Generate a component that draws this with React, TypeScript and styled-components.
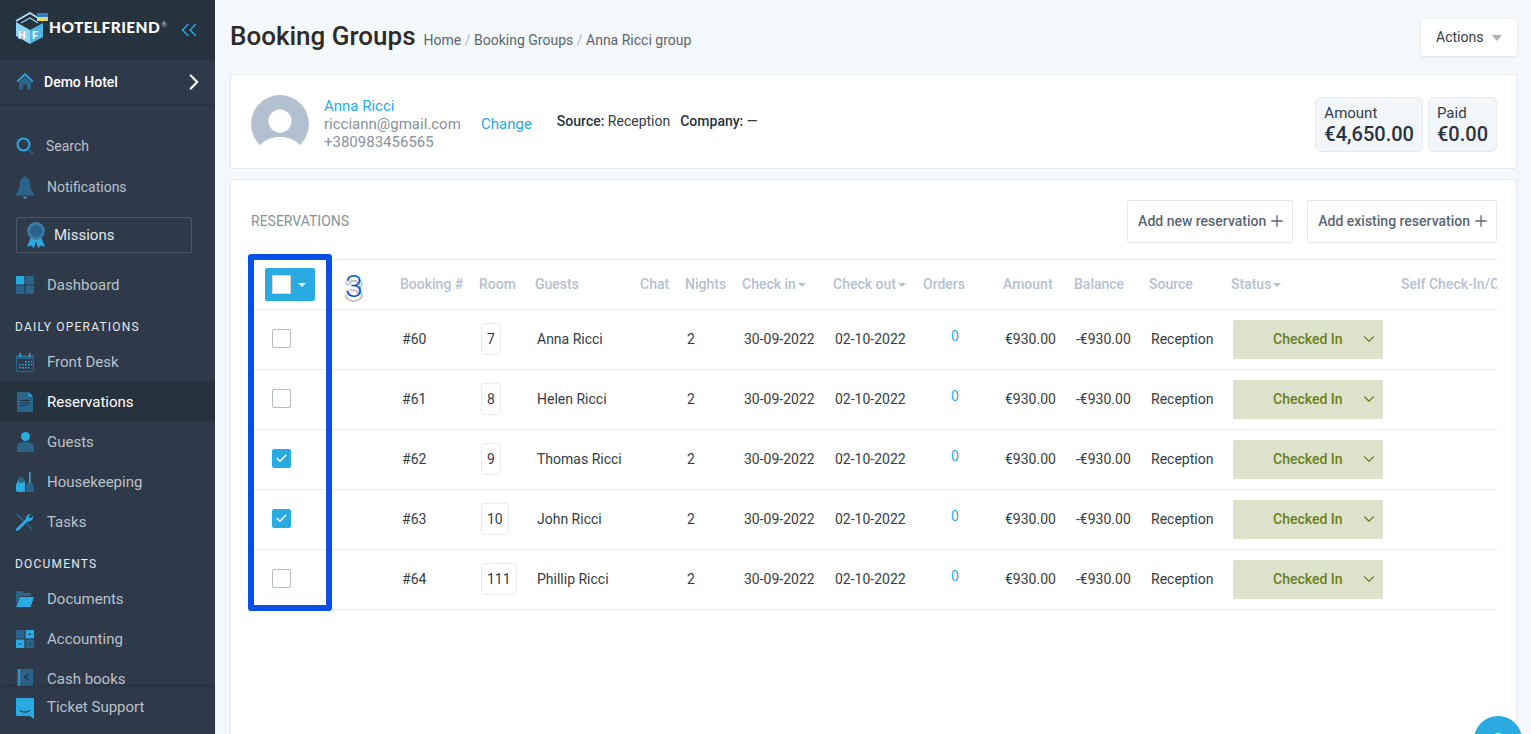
import React from 'react';
import styled, {createGlobalStyle} from 'styled-components';
import {Check, ChevronDown, ChevronRight, ChevronsLeft, Plus} from 'lucide-react';

const BLUE = '#29abe2';
const DEEP = '#2b6488';

const GlobalStyle = createGlobalStyle`
  html, body {
    margin: 0;
    padding: 0;
    height: 100%;
    overflow: hidden;
  }
  body {
    font-family: Roboto, "Liberation Sans", sans-serif;
    background-color: #f5f8fb;
  }
  * {
    box-sizing: border-box;
  }
`

const Page = styled.div`
  display: flex;
  width: 1531px;
  height: 734px;
  overflow: hidden;
  position: relative;
`

/* sidebar */
const Sidebar = styled.aside`
  width: 215px;
  flex: none;
  height: 734px;
  display: flex;
  flex-direction: column;
  background-color: #2e3a4a;
`

const LogoBar = styled.div`
  height: 60px;
  flex: none;
  display: flex;
  align-items: center;
  padding: 0 0 4px 15px;
  background-color: #27323f;
`

const LogoText = styled.span`
  font-family: Lato, Roboto, sans-serif;
  font-size: 15.5px;
  font-weight: 900;
  letter-spacing: 0.4px;
  color: #fff;
  line-height: 1;

  sup {
    font-size: 7px;
    font-weight: 400;
    color: #c8d0d8;
    vertical-align: 6px;
    line-height: 0;
    letter-spacing: 0;
    margin-left: 1px;
  }
`

const Collapse = styled.span`
  display: flex;
  margin-left: auto;
  margin-right: 13px;
  margin-top: 3px;
  color: ${BLUE};
`

const HotelRow = styled.div`
  height: 46px;
  flex: none;
  display: flex;
  align-items: center;
  padding: 0 8px 0 16px;
  border-bottom: 2px solid #283442;
  color: #fff;
  font-size: 14px;
  font-weight: 500;
  gap: 10px;

  svg:last-child {
    margin-left: auto;
  }
`

const Nav = styled.nav`
  flex: 1;
  min-height: 0;
  overflow: hidden;
  padding-top: 19px;
`

const NavItem = styled.div<{active?: boolean; tall?: number}>`
  height: ${({tall}) => tall || 40}px;
  display: flex;
  align-items: center;
  gap: 13px;
  padding: 2px 0 0 16px;
  font-size: 15px;
  color: ${({active}) => active ? '#fff' : '#b9c1cb'};
  background-color: ${({active}) => active ? '#27323f' : 'transparent'};
`

const SearchItem = styled(NavItem)`
  font-size: 14px;
  gap: 12px;
`

const NoticeItem = styled(NavItem)`
  font-size: 14px;
`

const DashboardItem = styled(NavItem)`
  padding-top: 0;
`

const IconSlot = styled.span`
  width: 18px;
  height: 20px;
  flex: none;
  display: flex;
  align-items: center;
  justify-content: center;
`

const MissionsBox = styled.div`
  height: 36px;
  margin: 10px 23px 12px 16px;
  border: 1px solid #4a5766;
  border-radius: 2px;
  display: flex;
  align-items: center;
  gap: 8px;
  padding-left: 9px;
  font-size: 15px;
  color: #e4e8ec;
`

const SectionLabel = styled.div<{tall: number}>`
  height: ${({tall}) => tall}px;
  display: flex;
  align-items: center;
  padding: 8px 0 0 15px;
  font-size: 12px;
  letter-spacing: 1.2px;
  color: #e4e8ec;
`

const Footer = styled.div`
  height: 48px;
  flex: none;
  border-top: 1px solid #283442;
  display: flex;
  align-items: flex-start;
  gap: 13px;
  padding: 11px 0 0 16px;
  font-size: 15px;
  color: #b9c1cb;
  box-shadow: 0 -1px 2px rgba(0, 0, 0, 0.12);
`

/* main column */
const Main = styled.main`
  flex: 1;
  min-width: 0;
  padding: 0 14px 0 15px;
`

const TopBar = styled.header`
  height: 74px;
  display: flex;
  align-items: flex-start;
  padding-top: 19px;
`

const Title = styled.h1`
  margin: 0;
  font-size: 26px;
  font-weight: 500;
  line-height: 34px;
  color: #2b2b2b;
`

const Crumbs = styled.div`
  margin: 6px 0 0 8px;
  line-height: 30px;
  font-size: 14px;
  color: #5c6670;

  i {
    font-style: normal;
    color: #b0b8c0;
    margin: 0 3.5px;
  }
`

const ActionsButton = styled.button`
  margin-left: auto;
  width: 96px;
  height: 37px;
  border: 0;
  background-color: #fff;
  box-shadow: 0 1px 3px rgba(60, 80, 100, 0.14);
  border-radius: 2px;
  font: 400 14px Roboto, sans-serif;
  color: #333c45;
  display: flex;
  align-items: center;
  padding: 0 15px 2px 15px;
  justify-content: space-between;

  &:after {
    content: '';
    border-left: 5px solid transparent;
    border-right: 5px solid transparent;
    border-top: 6px solid #a9b1ba;
    margin-top: 3px;
  }
`

const Card = styled.section`
  background-color: #fff;
  border: 1px solid #e4eaef;
  border-radius: 2px;
`

const GuestCard = styled(Card)`
  height: 95px;
  margin-bottom: 10px;
  display: flex;
  padding: 20px 19px 0 20px;
`

const Avatar = styled.svg`
  width: 58px;
  height: 58px;
  flex: none;
`

const Contact = styled.div`
  margin-left: 15px;
  font-size: 15px;
  line-height: 18px;
  color: #87919c;
  margin-top: 2px;
  width: 157px;
`

const LinkText = styled.a`
  color: ${BLUE};
  display: block;
`

const ChangeLink = styled(LinkText)`
  font-size: 15px;
  line-height: 18px;
  margin-top: 20px;
`

const Meta = styled.div`
  margin: 17px 0 0 25px;
  font-size: 14px;
  line-height: 18px;
  color: #333c45;
  display: flex;
  gap: 10px;

  b {
    font-weight: 500;
    color: #2a333c;
  }
`

const Totals = styled.div`
  margin-left: auto;
  margin-top: 2px;
  display: flex;
  gap: 5px;
`

const TotalBox = styled.div`
  height: 55px;
  padding: 6px 8px 0 8px;
  background-color: #f3f6f9;
  border: 1px solid #e4eaef;
  border-radius: 6px;
`

const TotalLabel = styled.div`
  font-size: 15px;
  line-height: 18px;
  color: #333c45;
`

const TotalValue = styled.div`
  font-size: 20px;
  font-weight: 500;
  line-height: 25px;
  color: #29333e;
`

const TableCard = styled(Card)`
  height: 600px;
  padding: 20px 19px 0 20px;
`

const CardHead = styled.div`
  height: 43px;
  display: flex;
  align-items: center;
  gap: 14px;
  margin-bottom: 16px;
`

const CardTitle = styled.div`
  margin-right: auto;
  padding-bottom: 2px;
  font-size: 14px;
  color: #87919c;
  text-transform: uppercase;
`

const AddButton = styled.button`
  height: 43px;
  padding: 0 6px 2px 10px;
  border: 1px solid #e1e7ec;
  border-radius: 3px;
  background-color: #fff;
  font: 500 14px Roboto, sans-serif;
  color: #5b6674;
  display: flex;
  align-items: center;
  gap: 2px;
`

const TableWrap = styled.div`
  position: relative;
`

const Table = styled.div`
  overflow: hidden;
  border-top: 1px solid #e6ecf0;
`

const COLUMNS = '149px 79px 56px 105px 45px 57px 91px 90px 80px 71px 75px 82px 170px 96px';

const HeadRow = styled.div`
  display: grid;
  grid-template-columns: ${COLUMNS};
  height: 50px;
  padding-bottom: 2px;
  align-items: center;
  border-bottom: 1px solid #e6ecf0;
  white-space: nowrap;
  font-size: 14px;
  font-weight: 500;
  color: #b5c1cf;
`

const Sort = styled.span`
  display: flex;
  align-items: center;
  gap: 2px;

  &:after {
    content: '';
    border-left: 4px solid transparent;
    border-right: 4px solid transparent;
    border-top: 4px solid #b5c1cf;
    margin-top: 2px;
  }
`

const BodyRow = styled.div`
  display: grid;
  grid-template-columns: ${COLUMNS};
  height: 60px;
  padding-bottom: 2px;
  align-items: center;
  border-bottom: 1px solid #e6ecf0;
  white-space: nowrap;
  font-size: 14px;
  color: #343c44;
`

const Cell = styled.div`
  padding-left: 2px;
`

const CheckCell = styled.div`
  padding-left: 21px;
  display: flex;
`

const Box = styled.span<{checked?: boolean}>`
  width: 19px;
  height: 19px;
  border-radius: 2px;
  border: 1px solid ${({checked}) => checked ? BLUE : '#b4bcc6'};
  background-color: ${({checked}) => checked ? BLUE : '#fff'};
  display: flex;
  align-items: center;
  justify-content: center;
  color: #fff;
`

const MasterCheck = styled.div`
  margin: 2px 0 0 14px;
  width: 50px;
  height: 33px;
  border-radius: 2px;
  background-color: ${BLUE};
  display: flex;
  align-items: center;
  padding-left: 7px;

  &:after {
    content: '';
    margin-left: 7px;
    border-left: 4px solid transparent;
    border-right: 4px solid transparent;
    border-top: 4px solid #fff;
  }
`

const MasterBox = styled.span`
  width: 19px;
  height: 19px;
  background-color: #fff;
  border: 1px solid #cfd6dd;
`

const RoomTag = styled.span`
  display: inline-flex;
  align-items: center;
  height: 32px;
  padding: 0 5px;
  min-width: 20px;
  justify-content: center;
  border: 1px solid #e6ecf0;
  border-radius: 3px;
`

const OrdersLink = styled.a`
  display: block;
  padding-left: 28px;
  margin-top: -6px;
  color: ${BLUE};
`

const StatusSelect = styled.div`
  width: 150px;
  height: 39px;
  margin: 2px 0 0 2px;
  border-radius: 2px;
  background-color: #dde3cb;
  color: #6b7f1e;
  font-weight: 500;
  display: flex;
  align-items: center;
  padding: 0 5px 2px 40px;
  justify-content: space-between;
`

const Highlight = styled.div`
  position: absolute;
  left: -3px;
  top: -5px;
  width: 84px;
  height: 357px;
  border: 6px solid #0a50e8;
  border-radius: 3px;
  pointer-events: none;
`

const Step = styled.span`
  position: absolute;
  left: 94px;
  top: 8px;
  font-size: 32px;
  line-height: 38px;
  font-weight: 300;
  color: #0a50e8;
  text-shadow: 0 2px 0 #fff, 0 3px 0 #fff, -2px 4px 0 #c0c4c8, 2px 4px 0 #c0c4c8, 0 5px 0 #c0c4c8;
`

const ChatBubble = styled.div`
  position: absolute;
  left: 1474px;
  top: 716px;
  width: 48px;
  height: 48px;
  border-radius: 50%;
  background-color: ${BLUE};

  &:after {
    content: '';
    position: absolute;
    left: 18px;
    top: 17px;
    width: 12px;
    height: 12px;
    border-radius: 50%;
    background-color: #fff;
  }
`

/* drawn icons */
const Logo = () => (
  <svg width="34" height="36" viewBox="0 0 34 36">
    <path d="M1 12 L15 20 V34 L1 26 Z" fill="#8fd4f0"/>
    <path d="M28 13 L15 20 V34 L28 27 Z" fill="#4fb4e2"/>
    <path d="M1 11 L15 3 L28 11" fill="none" stroke="#b4e0f3" strokeWidth="1.8"/>
    <path d="M6 13 L15 8 L23 13" fill="none" stroke="#8fd4f0" strokeWidth="1.300"/>
    <text x="3" y="29" fontSize="11" fontWeight="700" fontFamily="Roboto" fill="#fff">H</text>
    <text x="17" y="29" fontSize="11" fontWeight="700" fontFamily="Roboto" fill="#fff">F</text>
    <rect x="22" y="3" width="11" height="4" fill="#2b7fc4"/>
    <rect x="22" y="7" width="11" height="4" fill="#e5d774"/>
  </svg>
);

const HomeIcon = () => (
  <svg width="18" height="18" viewBox="0 0 18 18" style={{marginTop: -2}}>
    <path d="M0.5 9 L9 1 L17.5 9 L16 10 L9 3.6 L2 10 Z" fill={BLUE}/>
    <path d="M3 10 L9 5 L15 10 V17.5 H11 V12.5 H7 V17.5 H3 Z" fill={DEEP}/>
  </svg>
);

const SearchIcon = () => (
  <svg width="18" height="18" viewBox="0 0 18 18" fill="none">
    <circle cx="7.5" cy="7.5" r="6" stroke={BLUE} strokeWidth="2"/>
    <path d="M12.5 12.5 L17 17" stroke={DEEP} strokeWidth="1.6"/>
  </svg>
);

const BellIcon = () => (
  <svg width="18" height="23" viewBox="0 0 18 20" preserveAspectRatio="none">
    <path d="M9 0 C10 0 10.5 .8 10.5 1.6 C13.5 2.6 14.5 5 14.5 8 C14.5 11 15.5 13 18 15.5 V17 H0 V15.5 C2.5 13 3.5 11 3.5 8 C3.5 5 4.5 2.6 7.5 1.6 C7.5 .8 8 0 9 0 Z" fill={DEEP}/>
    <path d="M6.5 18 H11.5 L9 20 Z" fill={BLUE}/>
  </svg>
);

const MedalIcon = () => (
  <svg width="20" height="28" viewBox="0 0 20 28">
    <path d="M5 16 L1 26 L5 24.5 L8 27 L10 20 L12 27 L15 24.5 L19 26 L15 16 Z" fill={BLUE}/>
    <circle cx="10" cy="10" r="9" fill="#3a7ba3"/>
    <circle cx="10" cy="10" r="6" fill={DEEP}/>
  </svg>
);

const DashIcon = () => (
  <svg width="18" height="18" viewBox="0 0 18 18">
    <rect width="8.4" height="8.4" rx="1" fill={BLUE}/>
    <rect x="9.6" width="8.4" height="8.4" rx="1" fill={DEEP}/>
    <rect y="9.6" width="8.4" height="8.4" rx="1" fill={DEEP}/>
    <rect x="9.6" y="9.6" width="8.4" height="8.4" rx="1" fill={DEEP}/>
  </svg>
);

const CalendarIcon = () => (
  <svg width="18" height="19" viewBox="0 0 18 19">
    <rect y="2" width="18" height="17" rx="1" fill={DEEP}/>
    <rect x="1" y="6" width="16" height="12" fill="#2e3a4a"/>
    <rect x="3.5" width="1.5" height="4" fill={BLUE}/>
    <rect x="13" width="1.5" height="4" fill={BLUE}/>
    <path d="M9 8h1.6v1.6H9zM12 8h1.6v1.6H12zM15 8h1.4v1.6H15zM3 11h1.6v1.6H3zM6 11h1.6v1.6H6zM9 11h1.6v1.6H9zM12 11h1.6v1.6H12zM15 11h1.4v1.6H15zM3 14h1.6v1.6H3zM6 14h1.6v1.6H6zM9 14h1.6v1.6H9zM12 14h1.6v1.6H12z" fill={BLUE}/>
  </svg>
);

const DocIcon = () => (
  <svg width="16" height="20" viewBox="0 0 16 20">
    <path d="M1 0 H11 L16 5 V19 C16 19.6 15.6 20 15 20 H1 C.4 20 0 19.6 0 19 V1 C0 .4 .4 0 1 0 Z" fill={DEEP}/>
    <path d="M11.5 0 L16 4.5 H11.5 Z" fill={BLUE}/>
    <path d="M3 8h10v1H3zM3 10.5h10v1H3zM3 13h7v1H3z" fill="#1f3444"/>
  </svg>
);

const GuestIcon = () => (
  <svg width="17" height="20" viewBox="0 0 17 20">
    <circle cx="8.5" cy="4.5" r="4.5" fill={BLUE}/>
    <path d="M0 20 V15 C0 12 3 10 8.5 10 C14 10 17 12 17 15 V20 Z" fill={DEEP}/>
  </svg>
);

const BroomIcon = () => (
  <svg width="18" height="20" viewBox="0 0 18 20">
    <rect x="13" y="0" width="1.6" height="11" fill={BLUE}/>
    <path d="M10.5 11 H17 L18 20 H10 Z" fill={DEEP}/>
    <path d="M1 11 C1 8 3 7 5 7 C8 7 9 9 9 11 V20 H2 C.6 20 0 19 0 18 V13 Z" fill={BLUE}/>
    <circle cx="5" cy="8" r="3" fill={DEEP}/>
  </svg>
);

const ToolIcon = () => (
  <svg width="18" height="18" viewBox="0 0 18 18" fill="none">
    <path d="M1 1 L16.5 16.5" stroke={DEEP} strokeWidth="1.6"/>
    <path d="M1.5 16.5 L10.5 7.5" stroke={BLUE} strokeWidth="3" strokeLinecap="round"/>
    <path d="M10 8 C9 4.5 11 1 15 1 L12.5 3.6 L14.4 5.5 L17 3 C17.5 7 14 9.5 10.5 8 Z" fill={BLUE}/>
  </svg>
);

const FolderIcon = () => (
  <svg width="18" height="16" viewBox="0 0 18 16">
    <path d="M0 1 C0 .4 .4 0 1 0 H6 L8 2 H15 V5 H4 L0 13 Z" fill={DEEP}/>
    <path d="M4 6 H18 L15 15 C14.9 15.6 14.4 16 14 16 H0 Z" fill={BLUE}/>
  </svg>
);

const CalcIcon = () => (
  <svg width="18" height="18" viewBox="0 0 18 18">
    <rect width="8.4" height="8.4" fill={DEEP}/>
    <rect x="9.6" width="8.4" height="8.4" fill={BLUE}/>
    <rect y="9.6" width="8.4" height="8.4" fill={BLUE}/>
    <rect x="9.6" y="9.6" width="8.4" height="8.4" fill={DEEP}/>
    <path d="M12.8 4.2h2M13.8 3.2v2M3.2 13.8h2M15 13.8h-2" stroke="#2e3a4a" strokeWidth="1"/>
  </svg>
);

const CashIcon = () => (
  <svg width="16" height="20" viewBox="0 0 16 20">
    <rect width="16" height="20" rx="1.5" fill={DEEP}/>
    <rect x="1.5" width="1.4" height="20" fill={BLUE}/>
    <path d="M12.5 5.5 C10 4.5 8.5 6 8.5 8 C8.5 10 10 11.500 12.500 10.500 M7 7.200 H11 M7 8.800 H11" fill="none" stroke="#1f3444" strokeWidth="1"/>
  </svg>
);

const TicketIcon = () => (
  <svg width="18" height="21" viewBox="0 0 18 21">
    <path d="M1 0 H17 C17.600 0 18 .4 18 1 V21 L14 18 H1 C.4 18 0 17.600 0 17 V1 C0 .4 .4 0 1 0 Z" fill={BLUE}/>
    <path d="M4 12.500 C7 14.500 11 14.500 14 12.500" fill="none" stroke="#2e3a4a" strokeWidth="1.300"/>
  </svg>
);

const navTop = [
  {label: 'Front Desk', icon: <CalendarIcon/>},
  {label: 'Reservations', icon: <DocIcon/>, active: true},
  {label: 'Guests', icon: <GuestIcon/>},
  {label: 'Housekeeping', icon: <BroomIcon/>},
  {label: 'Tasks', icon: <ToolIcon/>},
];

const navDocs = [
  {label: 'Documents', icon: <FolderIcon/>},
  {label: 'Accounting', icon: <CalcIcon/>},
  {label: 'Cash books', icon: <CashIcon/>},
];

const reservations = [
  {id: 60, room: '7', guest: 'Anna Ricci', checked: false},
  {id: 61, room: '8', guest: 'Helen Ricci', checked: false},
  {id: 62, room: '9', guest: 'Thomas Ricci', checked: true},
  {id: 63, room: '10', guest: 'John Ricci', checked: true},
  {id: 64, room: '111', guest: 'Phillip Ricci', checked: false},
];

const App = () => {
  return (
    <Page>
      <GlobalStyle/>
      <Sidebar>
        <LogoBar>
          <Logo/>
          <LogoText>HOTELFRIEND<sup>®</sup></LogoText>
          <Collapse><ChevronsLeft size={26} strokeWidth={1.3}/></Collapse>
        </LogoBar>
        <HotelRow>
          <HomeIcon/>
          Demo Hotel
          <ChevronRight size={26} strokeWidth={2}/>
        </HotelRow>
        <Nav>
          <SearchItem><IconSlot><SearchIcon/></IconSlot>Search</SearchItem>
          <NoticeItem tall={42}><IconSlot><BellIcon/></IconSlot>Notifications</NoticeItem>
          <MissionsBox><MedalIcon/>Missions</MissionsBox>
          <DashboardItem><IconSlot><DashIcon/></IconSlot>Dashboard</DashboardItem>
          <SectionLabel tall={36}>DAILY OPERATIONS</SectionLabel>
          {navTop.map(item => (
            <NavItem key={item.label} active={item.active}>
              <IconSlot>{item.icon}</IconSlot>
              {item.label}
            </NavItem>
          ))}
          <SectionLabel tall={37}>DOCUMENTS</SectionLabel>
          {navDocs.map(item => (
            <NavItem key={item.label}>
              <IconSlot>{item.icon}</IconSlot>
              {item.label}
            </NavItem>
          ))}
        </Nav>
        <Footer>
          <IconSlot><TicketIcon/></IconSlot>
          Ticket Support
        </Footer>
      </Sidebar>

      <Main>
        <TopBar>
          <Title>Booking Groups</Title>
          <Crumbs>Home<i>/</i>Booking Groups<i>/</i>Anna Ricci group</Crumbs>
          <ActionsButton>Actions</ActionsButton>
        </TopBar>

        <GuestCard>
          <Avatar viewBox="0 0 58 58">
            <defs>
              <clipPath id="avatar-clip">
                <rect width="58" height="52"/>
              </clipPath>
            </defs>
            <g clipPath="url(#avatar-clip)">
              <circle cx="29" cy="29" r="29" fill="#b3c0cf"/>
              <circle cx="29" cy="26" r="11.500" fill="#fff"/>
              <ellipse cx="29" cy="58" rx="23" ry="16" fill="#fff"/>
            </g>
          </Avatar>
          <Contact>
            <LinkText>Anna Ricci</LinkText>
            ricciann@gmail.com
            <br/>
            +380983456565
          </Contact>
          <ChangeLink>Change</ChangeLink>
          <Meta>
            <span><b>Source:</b> Reception</span>
            <span><b>Company:</b> —</span>
          </Meta>
          <Totals>
            <TotalBox>
              <TotalLabel>Amount</TotalLabel>
              <TotalValue>€4,650.00</TotalValue>
            </TotalBox>
            <TotalBox>
              <TotalLabel>Paid</TotalLabel>
              <TotalValue>€0.00</TotalValue>
            </TotalBox>
          </Totals>
        </GuestCard>

        <TableCard>
          <CardHead>
            <CardTitle>Reservations</CardTitle>
            <AddButton>Add new reservation <Plus size={18} strokeWidth={1.75}/></AddButton>
            <AddButton>Add existing reservation <Plus size={18} strokeWidth={1.75}/></AddButton>
          </CardHead>
          <TableWrap>
            <Table>
              <HeadRow>
                <MasterCheck><MasterBox/></MasterCheck>
                <span>Booking #</span>
                <span>Room</span>
                <span>Guests</span>
                <span>Chat</span>
                <span>Nights</span>
                <Sort>Check in</Sort>
                <Sort>Check out</Sort>
                <span>Orders</span>
                <span>Amount</span>
                <span>Balance</span>
                <span>Source</span>
                <Sort>Status</Sort>
                <span>Self Check-In/Check-Out</span>
              </HeadRow>
              {reservations.map(r => (
                <BodyRow key={r.id}>
                  <CheckCell>
                    <Box checked={r.checked}>
                      {r.checked && <Check size={13} strokeWidth={3}/>}
                    </Box>
                  </CheckCell>
                  <Cell>#{r.id}</Cell>
                  <Cell><RoomTag>{r.room}</RoomTag></Cell>
                  <Cell>{r.guest}</Cell>
                  <Cell/>
                  <Cell>2</Cell>
                  <Cell>30-09-2022</Cell>
                  <Cell>02-10-2022</Cell>
                  <OrdersLink>0</OrdersLink>
                  <Cell>€930.00</Cell>
                  <Cell>-€930.00</Cell>
                  <Cell>Reception</Cell>
                  <StatusSelect>
                    Checked In
                    <ChevronDown size={18} strokeWidth={1.5}/>
                  </StatusSelect>
                  <Cell/>
                </BodyRow>
              ))}
            </Table>
            <Highlight/>
            <Step>3</Step>
          </TableWrap>
        </TableCard>
      </Main>
      <ChatBubble/>
    </Page>
  );
};

export default App;
